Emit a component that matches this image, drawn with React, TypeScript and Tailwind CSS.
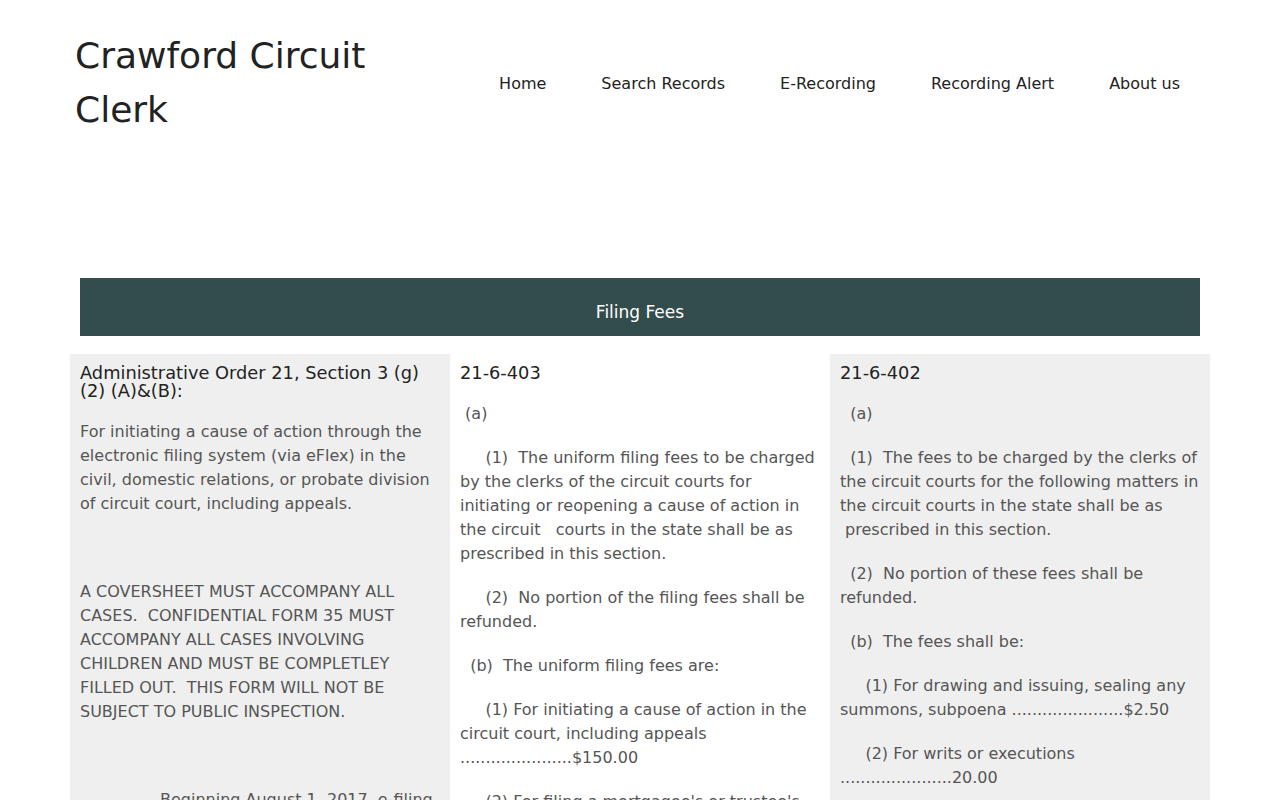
import React from "react";

const NAV = ["Home", "Search Records", "E-Recording", "Recording Alert", "About us"];

const nb = (n: number) => "\u00a0".repeat(n);

const Col = ({ title, grey, children }: { title: string; grey?: boolean; children: React.ReactNode }) => (
  <div className={`w-[380px] px-[10px] pt-[10px] pb-6 ${grey ? "bg-[#efefef]" : "bg-white"}`}>
    <h3 className="text-[17.8px] leading-[18px] text-[#222] mb-[20px]">{title}</h3>
    <div className="text-[16px] leading-[24px] text-[#555] [&>p]:mb-[20px]">{children}</div>
  </div>
);

export default function App() {
  return (
    <div className="min-h-screen bg-white font-['DejaVu_Sans','Liberation_Sans',sans-serif]">
      {/* header */}
      <header className="flex items-center justify-between pt-[29px] pl-[75px] pr-[100px]">
        <div className="w-[380px] text-[36px] leading-[54px] text-[#222]">Crawford Circuit Clerk</div>
        <nav className="flex items-center gap-[55px] pt-[2px] pl-[1px] text-[16px] text-[#222]">
          {NAV.map((n) => (
            <a key={n} href="#" className="whitespace-nowrap">
              {n}
            </a>
          ))}
        </nav>
      </header>

      <div className="mx-[80px] mt-[141px]">
        <div className="h-[58px] bg-[#334d4d] flex items-center justify-center pt-[12px] text-white text-[17px]">
          Filing Fees
        </div>

        <div className="flex -mx-[10px] mt-[18px]">
          <Col title="Administrative Order 21, Section 3 (g) (2) (A)&(B):" grey>
            <p>
              For initiating a cause of action through the electronic filing system (via eFlex) in the civil,
              domestic relations, or probate division of circuit court, including appeals.
            </p>
            <p>{nb(1)}</p>
            <p>
              A COVERSHEET MUST ACCOMPANY ALL CASES.{nb(2)}CONFIDENTIAL FORM 35 MUST ACCOMPANY ALL CASES
              INVOLVING CHILDREN AND MUST BE COMPLETLEY FILLED OUT.{nb(2)}THIS FORM WILL NOT BE SUBJECT TO
              PUBLIC INSPECTION.
            </p>
            <p>{nb(1)}</p>
            <p className="indent-[80px]">
              Beginning August 1, 2017, e-filing will be mandatory for all attorneys filing new cases in the
              Crawford County Circuit Court.
            </p>
          </Col>

          <Col title="21-6-403">
            <p>{nb(1)}(a)</p>
            <p>
              {nb(5)}(1){nb(2)}The uniform filing fees to be charged by the clerks of the circuit courts for
              initiating or reopening a cause of action in the circuit{nb(3)}courts in the state shall be as
              prescribed in this section.
            </p>
            <p>{nb(5)}(2){nb(2)}No portion of the filing fees shall be refunded.</p>
            <p>{nb(2)}(b){nb(2)}The uniform filing fees are:</p>
            <p>
              {nb(5)}(1) For initiating a cause of action in the circuit court, including appeals
              ......................$150.00
            </p>
            <p>
              {nb(5)}(2) For filing a mortgagee's or trustee's deed or an affidavit of foreclosure
              ......................$25.00
            </p>
          </Col>

          <Col title="21-6-402" grey>
            <p>{nb(2)}(a)</p>
            <p>
              {nb(2)}(1){nb(2)}The fees to be charged by the clerks of the circuit courts for the following
              matters in the circuit courts in the state shall be as {nb(1)}prescribed in this section.
            </p>
            <p>{nb(2)}(2){nb(2)}No portion of these fees shall be refunded.</p>
            <p>{nb(2)}(b){nb(2)}The fees shall be:</p>
            <p>{nb(5)}(1) For drawing and issuing, sealing any summons, subpoena ......................$2.50</p>
            <p>{nb(5)}(2) For writs or executions ......................20.00</p>
            <p>{nb(5)}(3) For approving bond ......................5.00</p>
          </Col>
        </div>
      </div>
    </div>
  );
}
